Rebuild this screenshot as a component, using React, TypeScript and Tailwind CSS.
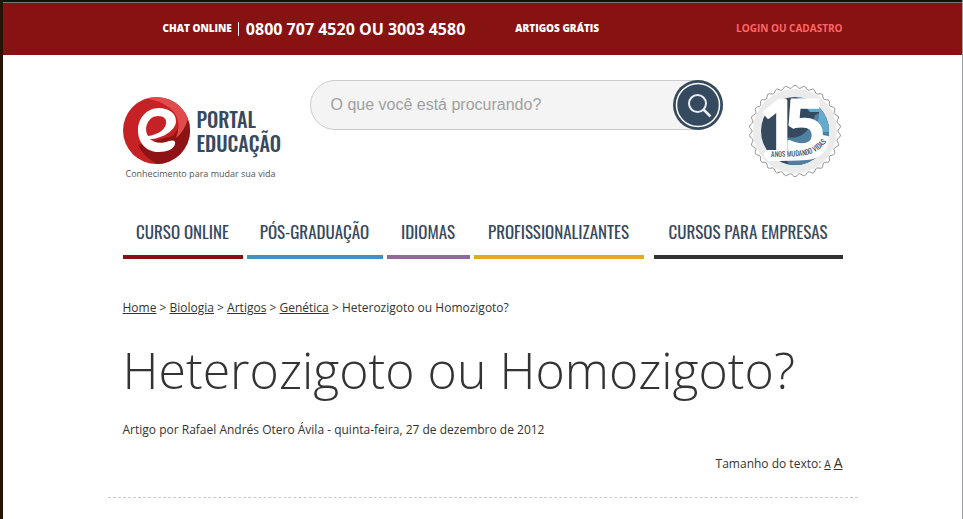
import React from "react";

const navItems = [
  { label: "CURSO ONLINE", style: "w-[120px] border-[#8a0f12]" },
  { label: "PÓS-GRADUAÇÃO", style: "w-[136px] border-[#4a8ebf]" },
  { label: "IDIOMAS", style: "w-[83px] border-[#93689b]" },
  { label: "PROFISSIONALIZANTES", style: "w-[170px] border-[#e2aa22]" },
  { label: "CURSOS PARA EMPRESAS", style: "ml-auto w-[189px] border-[#333333]" },
];

const crumbs = ["Home", "Biologia", "Artigos", "Genética"];

function LogoMark() {
  return (
    <svg viewBox="0 0 67 67" className="size-[67px] shrink-0" aria-hidden="true">
      <defs>
        <clipPath id="disc">
          <circle cx="33.5" cy="33.5" r="33.5" />
        </clipPath>
      </defs>
      <g clipPath="url(#disc)">
        <rect width="67" height="67" fill="#c62225" />
        <path d="M15 48 Q20 60 36 68 L67 67 L67 18 L57 12 Q60 28 50 39 Z" fill="#8e1315" />
        <path d="M21 1 Q32 -2 46 2 Q62 9 65 22 Q61 35 53 41 Q60 22 48 12 Q37 3 21 1 Z" fill="#e34a4b" />
      </g>
      <path
        d="M27 42 C38 42 53 34 53 24 C53 16 45 11 36 11 C23 11 15 22 15 33 C15 47 24 55 36 55 C44 55 51 52 52 47 C53 43 49 43 46 44 C39 47 31 46 27 42 Z M25 39 C20 30 26 19 35 19 C41 19 44 22 43 27 C42 33 34 38 25 39 Z"
        fill="#ffffff"
        fillRule="evenodd"
      />
    </svg>
  );
}

const sealPoints = Array.from({ length: 241 }, (_, i) => {
  const a = (i / 240) * Math.PI * 2;
  const r = 44.3 + 1.4 * Math.cos(a * 30);
  return `${(46 + r * Math.sin(a)).toFixed(2)},${(47 - r * Math.cos(a)).toFixed(2)}`;
}).join(" ");

function AnniversarySeal() {
  return (
    <svg viewBox="0 0 94 94" className="size-[94px] shrink-0" role="img" aria-label="15 anos mudando vidas">
      <defs>
        <clipPath id="seal">
          <circle cx="46" cy="47" r="34" />
        </clipPath>
        <path id="motto" d="M22 73 Q46 73 58 71 Q71 68 82 52" />
      </defs>
      <polygon points={sealPoints} fill="#ffffff" stroke="#777777" strokeWidth="0.8" />
      <circle cx="46" cy="47" r="42" fill="#ebebeb" />
      <g clipPath="url(#seal)">
        <rect width="94" height="94" fill="#35495f" />
        <path d="M35 53 Q58 58 66 31 L90 20 V94 H46 L35 70 Z" fill="#4d80a1" />
        <path d="M45 10 H74 V28 H61 Z" fill="#67abcc" />
        <path d="M63 44 Q71 38 70 28 L86 28 V48 H72 Z" fill="#67abcc" />
      </g>
      <path d="M19 67 H35 Q60 69 73 52 L79 53 Q78 73 58 75 Q42 76 20 76 Q12 71 19 67 Z" fill="#ffffff" stroke="#ffffff" strokeWidth="2" strokeLinejoin="round" />
      <text fontSize="70" fontWeight="600" fill="#ffffff" stroke="#ffffff" strokeWidth="3" strokeLinejoin="round" className="font-['Open_Sans',sans-serif]">
        <tspan x="10" y="67">1</tspan>
        <tspan x="36" y="67">5</tspan>
      </text>
      <text fontSize="7" fontWeight="400" fill="#35495f" className="font-[Oswald,'Roboto_Condensed',Roboto,sans-serif]">
        <textPath href="#motto">ANOS MUDANDO VIDAS</textPath>
      </text>
    </svg>
  );
}

export default function App() {
  return (
    <div className="min-h-screen border-r border-l-3 border-r-[#a0a0a8] border-l-[#251405] bg-white font-['Open_Sans',sans-serif] text-xs text-[#333333]">
      <div className="h-[3px] border-b border-[#777777] bg-[#111111]" />
      <div className="bg-[#871212] text-white">
        <div className="mx-auto flex h-[52px] max-w-[750px] items-center px-[15px] text-[10px] font-bold">
          <div className="ml-10 flex items-center">
            <a href="#chat" className="font-extrabold">CHAT ONLINE</a>
            <span className="mr-[7px] ml-[6px] h-[14px] w-px bg-white" />
            <strong className="text-base leading-[22px] font-bold">0800 707 4520 OU 3003 4580</strong>
          </div>
          <a href="#artigos" className="ml-[50px] font-extrabold">ARTIGOS GRÁTIS</a>
          <a href="#login" className="ml-auto text-[#ff6666]">LOGIN OU CADASTRO</a>
        </div>
      </div>

      <div className="mx-auto max-w-[750px] px-[15px]">
        <header className="flex items-start pt-[25px]">
          <a href="#home" className="mt-[17px] block w-[187px]">
            <span className="flex items-center gap-[7px]">
              <LogoMark />
              <span className="font-[Oswald,'Roboto_Condensed',Roboto,sans-serif] text-xl leading-6 font-medium text-[#35495f]">
                PORTAL
                <br />
                EDUCAÇÃO
              </span>
            </span>
            <span className="ml-[3px] block text-[9px] leading-5 text-[#555555]">Conhecimento para mudar sua vida</span>
          </a>
          <form className="flex h-[50px] w-[413px] rounded-full border border-[#cccccc] bg-[#f4f4f4]">
            <input
              type="text"
              aria-label="Buscar"
              placeholder="O que você está procurando?"
              className="min-w-0 flex-1 bg-transparent px-5 font-['Liberation_Sans',sans-serif] text-base text-[#333333] outline-none placeholder:text-[#a0a0a0]"
            />
            <button type="button" aria-label="Pesquisar" className="-my-px -mr-px size-[50px] shrink-0">
              <svg viewBox="0 0 50 50" className="size-[50px]" aria-hidden="true">
                <circle cx="25" cy="25" r="25" fill="#35495f" />
                <circle cx="25" cy="25" r="21.5" fill="none" stroke="#ffffff" strokeWidth="1.5" />
                <circle cx="24.5" cy="23.5" r="8.5" fill="none" stroke="#e8edf2" strokeWidth="2" />
                <path d="M30.5 29.5 L37.5 36.5" stroke="#e8edf2" strokeWidth="2.5" />
              </svg>
            </button>
          </form>
          <div className="mt-1 ml-auto">
            <AnniversarySeal />
          </div>
        </header>

        <nav className="mt-[21px] flex gap-1">
          {navItems.map((item) => (
            <a
              key={item.label}
              href="#curso"
              className={`flex h-[54px] items-center justify-center border-b-4 pt-[3px] font-[Oswald,'Roboto_Condensed',Roboto,sans-serif] text-[17px] leading-6 font-normal whitespace-nowrap text-[#35495f] ${item.style}`}
            >
              {item.label}
            </a>
          ))}
        </nav>

        <main>
          <nav aria-label="Trilha" className="mt-10 leading-[18px]">
            {crumbs.map((c) => (
              <React.Fragment key={c}>
                <a href="#trilha" className="underline">{c}</a>
                {" > "}
              </React.Fragment>
            ))}
            Heterozigoto ou Homozigoto?
          </nav>
          <h1 className="mt-5 text-[50px] leading-[66px] font-light">Heterozigoto ou Homozigoto?</h1>
          <p className="mt-[18px] leading-[18px]">Artigo por Rafael Andrés Otero Ávila - quinta-feira, 27 de dezembro de 2012</p>
          <p className="mt-[14px] flex items-baseline justify-end gap-[3px] leading-[18px]">
            Tamanho do texto:
            <button type="button" className="text-[10px] underline">A</button>
            <button type="button" className="text-sm underline">A</button>
          </p>
        </main>
      </div>
      <hr className="mx-auto mt-6 max-w-[750px] border-dashed border-[#cccccc]" />
    </div>
  );
}
